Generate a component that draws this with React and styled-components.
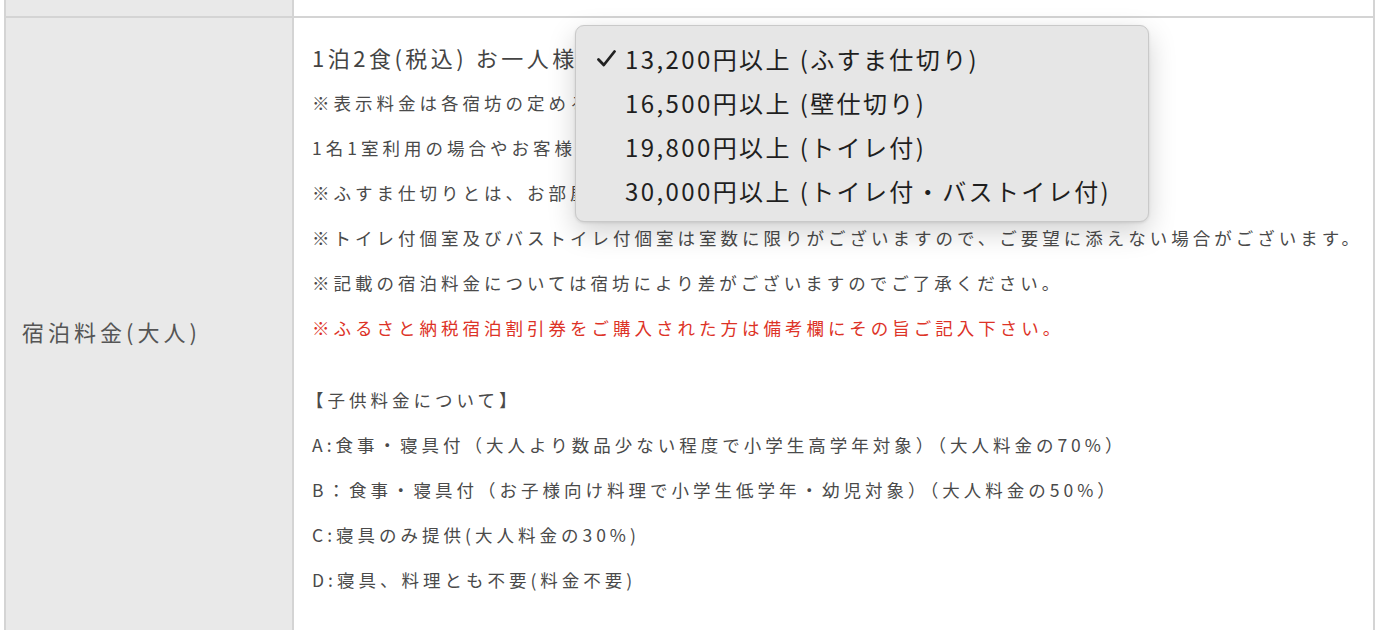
import React from "react";
import styled, { createGlobalStyle } from "styled-components";

const GlobalStyle = createGlobalStyle`
  body {
    margin: 0;
    background: #ffffff;
    font-family: "Noto Sans CJK JP", "Noto Sans", sans-serif;
    color: #444;
  }
`;

const options = [
  "13,200円以上 (ふすま仕切り)",
  "16,500円以上 (壁仕切り)",
  "19,800円以上 (トイレ付)",
  "30,000円以上 (トイレ付・バストイレ付)",
];

const notes = [
  "※表示料金は各宿坊の定める最低料金です。",
  "1名1室利用の場合やお客様のご要望により異なります。",
  "※ふすま仕切りとは、お部屋をふすまで仕切った客室です。",
  "※トイレ付個室及びバストイレ付個室は室数に限りがございますので、ご要望に添えない場合がございます。",
  "※記載の宿泊料金については宿坊により差がございますのでご了承ください。",
];

const kids = [
  "A:食事・寝具付（大人より数品少ない程度で小学生高学年対象）（大人料金の70%）",
  "B：食事・寝具付（お子様向け料理で小学生低学年・幼児対象）（大人料金の50%）",
  "C:寝具のみ提供(大人料金の30%)",
  "D:寝具、料理とも不要(料金不要)",
];

const CheckIcon = () => (
  <svg width="19" height="17" viewBox="0 0 19 17">
    <path
      d="M1.5 9.5 L6.8 15 L17.5 1.5"
      fill="none"
      stroke="#222"
      strokeWidth="2.8"
      strokeLinecap="round"
      strokeLinejoin="round"
    />
  </svg>
);

const App = () => {
  return (
    <>
      <GlobalStyle />
      <Page>
        <Table>
          <colgroup>
            <LabelCol />
            <col />
          </colgroup>
          <tbody>
            <tr>
              <Label $top />
              <Cell $top />
            </tr>
            <tr>
              <Label>宿泊料金(大人)</Label>
              <Cell>
                <Content>
                  <Lead>1泊2食(税込) お一人様</Lead>
                  {notes.map((n) => (
                    <Line key={n}>{n}</Line>
                  ))}
                  <Line $red>
                    ※ふるさと納税宿泊割引券をご購入された方は備考欄にその旨ご記入下さい。
                  </Line>
                  <Spacer />
                  <Line $bracket>【子供料金について】</Line>
                  {kids.map((k) => (
                    <Line key={k}>{k}</Line>
                  ))}
                  <Menu>
                    {options.map((o, i) => (
                      <MenuItem key={o}>
                        <Check>{i === 0 && <CheckIcon />}</Check>
                        {o}
                      </MenuItem>
                    ))}
                  </Menu>
                </Content>
              </Cell>
            </tr>
          </tbody>
        </Table>
      </Page>
    </>
  );
};

export default App;

const Page = styled.div`
  padding-left: 4px;
  margin-top: -30px;
  height: 660px;
  overflow: hidden;
`;

const Table = styled.table`
  width: 1371px;
  border-collapse: collapse;
  table-layout: fixed;
`;

const LabelCol = styled.col`
  width: 288px;
`;

const Label = styled.th`
  height: ${(p) => (p.$top ? "44px" : "auto")};
  padding: 0 0 0 16px;
  background: #e9e9e9;
  border: 2px solid #d4d4d4;
  text-align: left;
  vertical-align: middle;
  font-weight: 400;
  font-size: 22px;
  letter-spacing: 4px;
  color: #555;
`;

const Cell = styled.td`
  padding: 0;
  background: #fff;
  border: 2px solid #d4d4d4;
  vertical-align: top;
`;

const Content = styled.div`
  position: relative;
  padding: 17px 0 42px 18px;
`;

const Lead = styled.div`
  font-size: 22px;
  line-height: 45px;
  letter-spacing: 3.5px;
  color: #444;
`;

const Line = styled.div`
  font-size: 17.5px;
  line-height: 45px;
  letter-spacing: 4px;
  white-space: nowrap;
  color: ${(p) => (p.$red ? "#dd3327" : "#4a4a4a")};
  margin-left: ${(p) => (p.$bracket ? "-6px" : "0")};
`;

const Spacer = styled.div`
  height: 27px;
`;

const Menu = styled.div`
  position: absolute;
  left: 281px;
  top: 7px;
  width: 572px;
  padding: 10px 0 9px;
  background: #e6e6e6;
  border: 1px solid #c9c9c9;
  border-radius: 9px;
  box-shadow: 0 10px 28px rgba(0, 0, 0, 0.18), 0 1px 3px rgba(0, 0, 0, 0.1);
`;

const MenuItem = styled.div`
  display: flex;
  align-items: center;
  height: 44px;
  padding-left: 21px;
  font-size: 24px;
  letter-spacing: 2.4px;
  color: #1f1f1f;
  white-space: nowrap;
`;

const Check = styled.span`
  display: inline-flex;
  width: 28px;
  align-items: center;
`;
